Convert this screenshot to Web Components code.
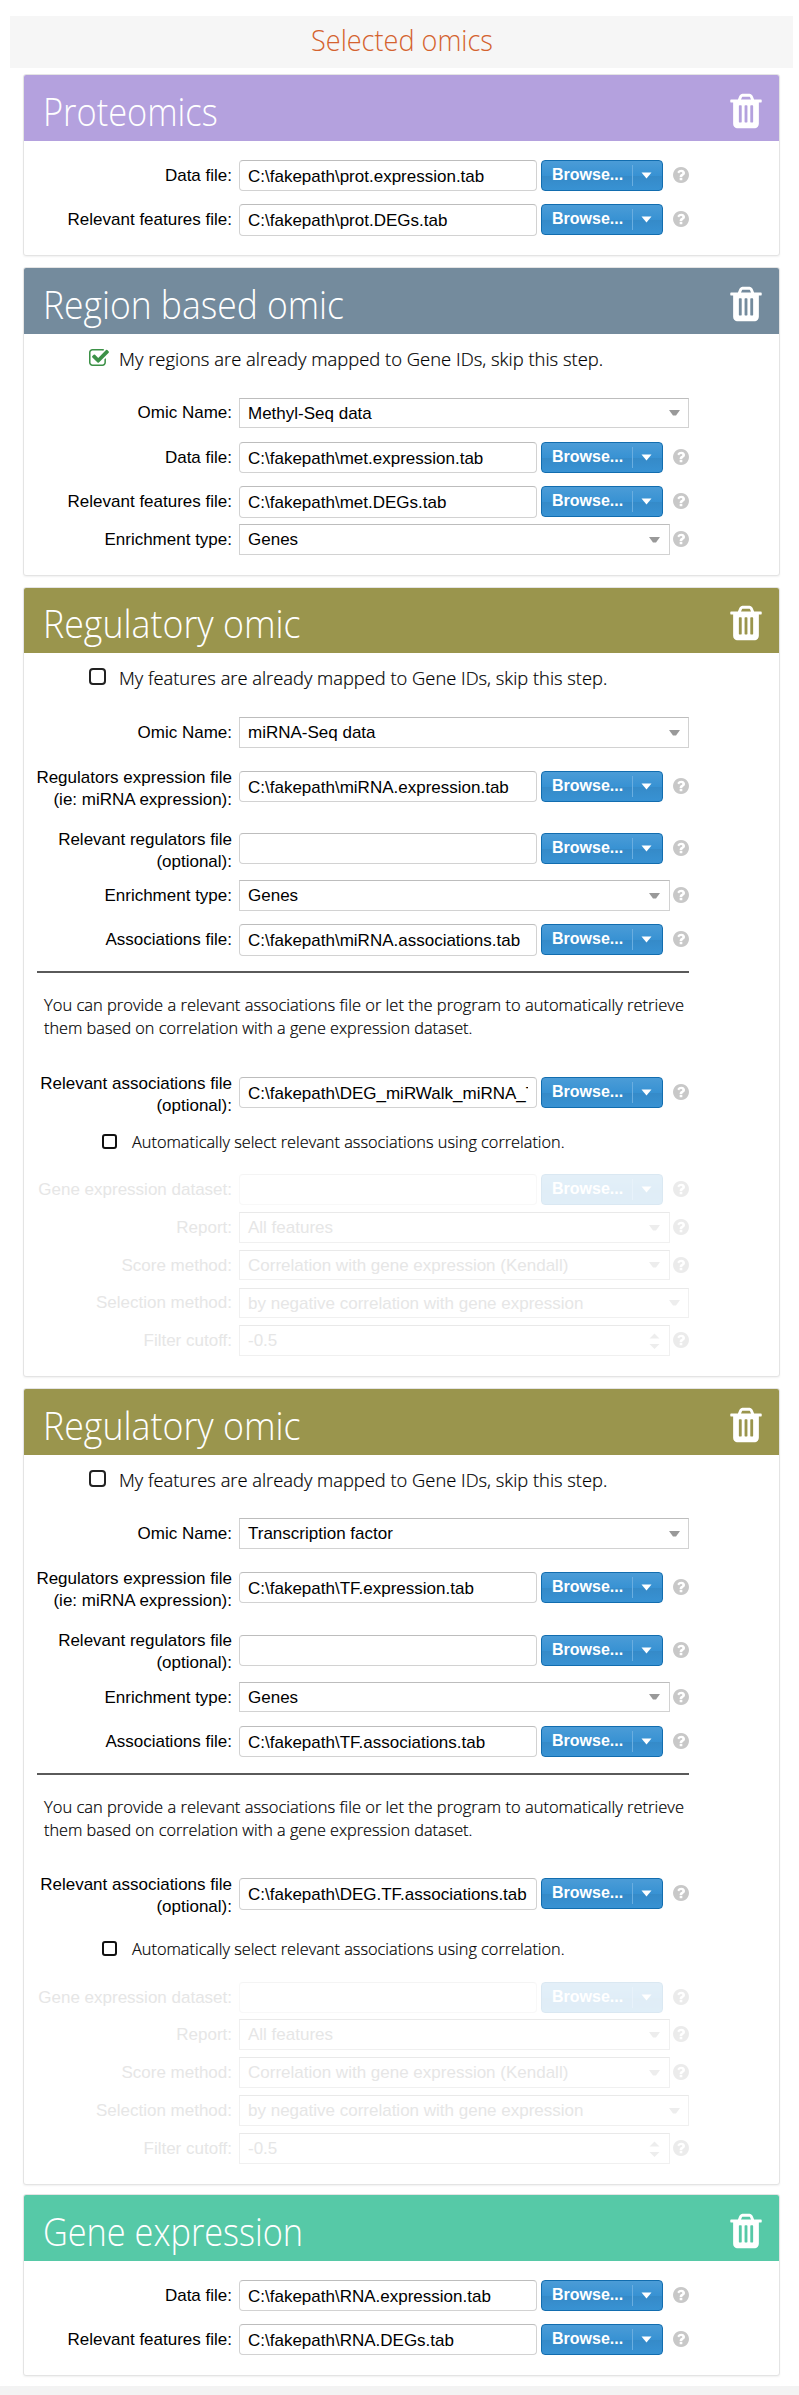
<!DOCTYPE html>
<html lang="en">
<head>
<meta charset="utf-8">
<title>Selected omics</title>
<style>
html,body{margin:0;padding:0;background:#fff}
body{font:17px "Liberation Sans",Arial,sans-serif;color:#000;width:799px}
</style>
</head>
<body>
<omics-page>
  <omic-card heading="Proteomics" w="175" style="--c:#b4a1de;height:182px">
    <form-row label="Data file:" help style="margin-top:19px"><file-field value="C:\fakepath\prot.expression.tab"></file-field></form-row>
    <form-row label="Relevant features file:" help style="margin-top:13px;--h:32px"><file-field value="C:\fakepath\prot.DEGs.tab"></file-field></form-row>
  </omic-card>

  <omic-card heading="Region based omic" w="301" style="--c:#748b9d;height:309px">
    <check-line checked w="484" style="height:64px">My regions are already mapped to Gene IDs, skip this step.</check-line>
    <form-row label="Omic Name:" style="--h:30px;--lt:4px"><combo-field wide value="Methyl-Seq data"></combo-field></form-row>
    <form-row label="Data file:" help style="margin-top:14px"><file-field value="C:\fakepath\met.expression.tab"></file-field></form-row>
    <form-row label="Relevant features file:" help style="margin-top:13px;--h:32px"><file-field value="C:\fakepath\met.DEGs.tab"></file-field></form-row>
    <form-row label="Enrichment type:" help style="margin-top:6px"><combo-field value="Genes"></combo-field></form-row>
  </omic-card>

  <omic-card heading="Regulatory omic" w="258" style="--c:#9a954d;--hh:65px;--up:-1px;height:790px">
    <check-line w="488" style="height:64px">My features are already mapped to Gene IDs, skip this step.</check-line>
    <form-row label="Omic Name:"><combo-field wide value="miRNA-Seq data"></combo-field></form-row>
    <form-row label="Regulators expression file|(ie: miRNA expression):" help style="margin-top:23px"><file-field value="C:\fakepath\miRNA.expression.tab"></file-field></form-row>
    <form-row label="Relevant regulators file|(optional):" help style="margin-top:31px"><file-field value=""></file-field></form-row>
    <form-row label="Enrichment type:" help style="margin-top:16px"><combo-field value="Genes"></combo-field></form-row>
    <form-row label="Associations file:" help style="margin-top:13px;--h:32px"><file-field value="C:\fakepath\miRNA.associations.tab"></file-field></form-row>
    <info-note style="margin-top:15px;height:106px"></info-note>
    <form-row label="Relevant associations file|(optional):" help><file-field value="C:\fakepath\DEG_miRWalk_miRNA_T"></file-field></form-row>
    <check-line small w="433" style="height:66px">Automatically select relevant associations using correlation.</check-line>
    <form-row off label="Gene expression dataset:" help><file-field value=""></file-field></form-row>
    <form-row off label="Report:" help style="margin-top:7px"><combo-field value="All features"></combo-field></form-row>
    <form-row off label="Score method:" help style="margin-top:7px;--h:30px"><combo-field value="Correlation with gene expression (Kendall)"></combo-field></form-row>
    <form-row off label="Selection method:" style="margin-top:8px;--h:30px;--lt:4px"><combo-field wide value="by negative correlation with gene expression"></combo-field></form-row>
    <form-row off label="Filter cutoff:" help style="margin-top:7px"><combo-field spin value="-0.5"></combo-field></form-row>
  </omic-card>

  <omic-card heading="Regulatory omic" w="258" style="--c:#9a954d;height:797px">
    <check-line w="488" style="height:63px">My features are already mapped to Gene IDs, skip this step.</check-line>
    <form-row label="Omic Name:"><combo-field wide value="Transcription factor"></combo-field></form-row>
    <form-row label="Regulators expression file|(ie: miRNA expression):" help style="margin-top:23px"><file-field value="C:\fakepath\TF.expression.tab"></file-field></form-row>
    <form-row label="Relevant regulators file|(optional):" help style="margin-top:32px;--lt:-5px"><file-field value=""></file-field></form-row>
    <form-row label="Enrichment type:" help style="margin-top:16px;--h:30px"><combo-field value="Genes"></combo-field></form-row>
    <form-row label="Associations file:" help style="margin-top:14px"><file-field value="C:\fakepath\TF.associations.tab"></file-field></form-row>
    <info-note style="margin-top:16px;height:105px"></info-note>
    <form-row label="Relevant associations file|(optional):" help style="--h:32px"><file-field value="C:\fakepath\DEG.TF.associations.tab"></file-field></form-row>
    <check-line small w="433" style="height:72px;--ct:31px">Automatically select relevant associations using correlation.</check-line>
    <form-row off label="Gene expression dataset:" help><file-field value=""></file-field></form-row>
    <form-row off label="Report:" help style="margin-top:6px"><combo-field value="All features"></combo-field></form-row>
    <form-row off label="Score method:" help style="margin-top:7px"><combo-field value="Correlation with gene expression (Kendall)"></combo-field></form-row>
    <form-row off label="Selection method:" style="margin-top:7px"><combo-field wide value="by negative correlation with gene expression"></combo-field></form-row>
    <form-row off label="Filter cutoff:" help style="margin-top:7px"><combo-field spin value="-0.5"></combo-field></form-row>
  </omic-card>

  <omic-card heading="Gene expression" w="260" style="--c:#56c9a7;height:182px">
    <form-row label="Data file:" help style="margin-top:19px"><file-field value="C:\fakepath\RNA.expression.tab"></file-field></form-row>
    <form-row label="Relevant features file:" help style="margin-top:13px"><file-field value="C:\fakepath\RNA.DEGs.tab"></file-field></form-row>
  </omic-card>
</omics-page>

<script>
const shadow = (el, css, html) => {
  el.attachShadow({mode: 'open'}).innerHTML = `<style>*{box-sizing:border-box}${css}</style>${html}`;
};

/* A single line of light text squeezed or stretched to the width in its "w" attribute. */
class FitText extends HTMLElement {
  connectedCallback() {
    shadow(this, `
      :host{display:block;width:${this.getAttribute('w')}px;white-space:nowrap;font-family:"Open Sans","Noto Sans",sans-serif;font-weight:300}
      span{display:inline-block;transform-origin:0 50%}`,
      `<span><slot></slot></span>`);
    const s = this.shadowRoot.querySelector('span');
    s.style.transform = `scaleX(${+this.getAttribute('w') / s.offsetWidth})`;
  }
}

class OmicsPage extends HTMLElement {
  connectedCallback() {
    shadow(this, `
      :host{display:flex;flex-direction:column;height:2395px;padding-top:16px;box-sizing:border-box}
      .bar{height:52px;margin:0 6px 6px 10px;background:#f6f6f6;display:flex;padding-left:301px;color:#d4622e}
      .bar fit-text{font-size:29px;line-height:48px}
      .list{display:flex;flex-direction:column;gap:11px;padding:0 19px 0 23px;flex:1}
      ::slotted(omic-card:last-child){margin-top:-2px}
      .foot{height:9px;background:#f3f3f3}`,
      `<div class="bar"><fit-text w="182">Selected omics</fit-text></div>
       <div class="list"><slot></slot></div><div class="foot"></div>`);
  }
}

class OmicCard extends HTMLElement {
  connectedCallback() {
    shadow(this, `
      :host{display:block;box-sizing:border-box;border:1px solid #e4e4e4;border-radius:3px;box-shadow:0 1px 2px rgba(0,0,0,.06);background:#fff}
      header{height:var(--hh,66px);background:var(--c);color:#fff;display:flex;justify-content:space-between;padding:0 13px 0 18.500px;border-radius:2px 2px 0 0}
      fit-text{font-size:38.5px;line-height:52px;padding-top:calc(10px + var(--up,0px))}
      svg{width:40px;height:40px;margin-top:calc(16px + var(--up,0px));flex:none}`,
      `<header><fit-text w="${this.getAttribute('w')}">${this.getAttribute('heading')}</fit-text>
      <svg viewBox="0 0 1792 1792" fill="#fff"><path d="M704 1376v-704q0-14-9-23t-23-9h-64q-14 0-23 9t-9 23v704q0 14 9 23t23 9h64q14 0 23-9t9-23zm256 0v-704q0-14-9-23t-23-9h-64q-14 0-23 9t-9 23v704q0 14 9 23t23 9h64q14 0 23-9t9-23zm256 0v-704q0-14-9-23t-23-9h-64q-14 0-23 9t-9 23v704q0 14 9 23t23 9h64q14 0 23-9t9-23zm-544-992h448l-48-117q-7-9-17-11h-317q-10 2-17 11zm928 32v64q0 14-9 23t-23 9h-96v948q0 83-47 143.5t-113 60.5h-832q-66 0-113-58.5t-47-141.5v-952h-96q-14 0-23-9t-9-23v-64q0-14 9-23t23-9h309l70-167q15-37 54-63t79-26h320q40 0 79 26t54 63l70 167h309q14 0 23 9t9 23z"/></svg></header>
      <slot></slot>`);
  }
}

class CheckLine extends HTMLElement {
  connectedCallback() {
    const small = this.hasAttribute('small');
    const box = this.hasAttribute('checked')
      ? `<svg width="20" height="17" viewBox="64 128 1664 1408" fill="#3c9147"><path d="M1472 930v318q0 119-84.5 203.5t-203.5 84.5h-832q-119 0-203.5-84.5t-84.5-203.5v-832q0-119 84.5-203.5t203.5-84.5h832q63 0 117 25 15 7 18 23 3 17-9 29l-49 49q-10 10-23 10-3 0-9-2-23-6-45-6h-832q-66 0-113 47t-47 113v832q0 66 47 113t113 47h832q66 0 113-47t47-113v-254q0-13 9-22l64-64q10-10 23-10 6 0 12 3 20 8 20 29zm231-489l-814 814q-24 24-57 24t-57-24l-430-430q-24-24-24-57t24-57l110-110q24-24 57-24t57 24l263 263 647-647q24-24 57-24t57 24l110 110q24 24 24 57t-24 57z"/></svg>`
      : '<i></i>';
    shadow(this, small ? `
      :host{display:flex;box-sizing:border-box;padding:var(--ct,26px) 0 0 78px}
      .b{width:30px} i{display:block;width:15px;height:15px;border:2px solid #111;border-radius:3px}
      fit-text{font-size:16.7px;line-height:22px;margin-top:-3px;-webkit-text-stroke:.2px}` : `
      :host{display:flex;box-sizing:border-box;padding:15px 0 0 65px}
      .b{width:30px} i{display:block;width:17px;height:17px;border:2px solid #222;border-radius:4px}
      svg{display:block}
      fit-text{font-size:18.7px;line-height:26px;margin-top:-3px;-webkit-text-stroke:.2px}`,
      `<div class="b">${box}</div><fit-text w="${this.getAttribute('w')}">${this.textContent}</fit-text>`);
  }
}

class FormRow extends HTMLElement {
  connectedCallback() {
    const parts = this.getAttribute('label').split('|');
    const up = parts.length > 1 ? '-4px' : '5px';
    shadow(this, `
      :host{display:flex;align-items:flex-start;height:var(--h,31px)}
      :host([off]){--edge:#f0f0f0;--edge-top:#e9e9e9;--ink:#e6e6e6;--arrow:#ededed}
      label{width:208px;margin:var(--lt,${up}) 7px 0 0;text-align:right;line-height:22px;white-space:nowrap;flex:none;color:var(--ink,#000);display:flex;flex-direction:column}
      .f{width:434px;height:100%;flex:none}
      :host(:not([help])) .f{width:450px}
      :host([off]) ::slotted(file-field){opacity:.15}
      svg{width:16px;height:16px;flex:none;margin-top:6.5px}
      :host([off]) svg{opacity:.35}`,
      `<label>${parts.map(p => `<span>${p}</span>`).join('')}</label><div class="f"><slot></slot></div>` +
      (this.hasAttribute('help') ? `<svg viewBox="128 128 1536 1536" fill="#c8c8c8"><path d="M1024 1376v-192q0-14-9-23t-23-9h-192q-14 0-23 9t-9 23v192q0 14 9 23t23 9h192q14 0 23-9t9-23zm256-672q0-88-55.5-163t-138.5-116-170-41q-243 0-371 213-15 24 8 42l132 100q7 6 19 6 16 0 25-12 53-68 86-92 34-24 86-24 48 0 85.5 26t37.5 59q0 38-20 61t-68 45q-63 28-115.5 86.5t-52.5 125.5v36q0 14 9 23t23 9h192q14 0 23-9t9-23q0-19 21.5-49.5t54.5-49.5q32-18 49-28.5t46-35 44.5-48 28-60.5 12.5-81zm384 192q0 209-103 385.5t-279.5 279.5-385.5 103-385.5-103-279.5-279.5-103-385.5 103-385.5 279.5-279.5 385.5-103 385.5 103 279.5 279.5 103 385.5z"/></svg>` : ''));
  }
}

class FileField extends HTMLElement {
  connectedCallback() {
    shadow(this, `
      :host{display:flex;height:100%;gap:4px}
      .t{width:298px;height:100%;border:1px solid #d2d2d2;border-top-color:#bdbdbd;border-radius:4px;padding:1px 0 0 8px;background:#fff}
      .t div{width:280px;overflow:hidden;white-space:nowrap;line-height:29px}
      .b{width:122px;height:31px;border:1px solid #126daf;border-radius:4px;display:flex;align-items:center;color:#fff;font-weight:bold;font-size:16px;
        background:linear-gradient(#4b9cd7,#3892d3 50%,#358ac8 51%,#3892d3)}
      .b span{width:90px;padding-left:10px;line-height:28px;padding-bottom:1px;flex:none}
      .b i{width:1px;height:21px;background:#6aaee0;margin-right:8px;flex:none}
      svg{width:11px;height:7px;flex:none}`,
      `<div class="t"><div>${this.getAttribute('value')}</div></div>
       <div class="b"><span>Browse...</span><i></i><svg viewBox="0 0 11 7"><path d="M.5.5h10l-5 6z" fill="#fff"/></svg></div>`);
  }
}

class ComboField extends HTMLElement {
  connectedCallback() {
    const wide = this.hasAttribute('wide');
    const icon = this.hasAttribute('spin')
      ? '<svg width="11" height="16" viewBox="0 0 11 16"><path d="M.5 5.500h10l-5-5zM.5 11h10l-5 5z"/></svg>'
      : '<svg width="11" height="6" viewBox="0 0 11 6"><path d="M0 0h11l-4 5.500h-3z"/></svg>';
    shadow(this, `
      :host{display:flex;box-sizing:border-box;width:${wide ? 450 : 431}px;height:100%;border:1px solid var(--edge,#d2d2d2);border-top-color:var(--edge-top,#bdbdbd);align-items:center;justify-content:space-between;padding:0 ${wide ? 8 : 9}px 0 8px;background:#fff}
      span{white-space:nowrap;line-height:28px;padding-top:1px;color:var(--ink,#000)}
      svg{fill:var(--arrow,#999)}`,
      `<span>${this.getAttribute('value')}</span>${icon}`);
  }
}

/* Divider with the justified two-line explanation under it. */
class InfoNote extends HTMLElement {
  connectedCallback() {
    shadow(this, `
      :host{display:block;width:652px;margin-left:13px;border-top:2px solid #5a5a5a;box-sizing:border-box;padding:20px 0 0 6.5px}
      fit-text{font-size:16.7px;line-height:23px;-webkit-text-stroke:.2px}`,
      `<fit-text w="640">You can provide a relevant associations file or let the program to automatically retrieve</fit-text>
       <fit-text w="428">them based on correlation with a gene expression dataset.</fit-text>`);
  }
}

customElements.define('fit-text', FitText);
customElements.define('info-note', InfoNote);
customElements.define('combo-field', ComboField);
customElements.define('file-field', FileField);
customElements.define('form-row', FormRow);
customElements.define('check-line', CheckLine);
customElements.define('omic-card', OmicCard);
customElements.define('omics-page', OmicsPage);
</script>
</body>
</html>
